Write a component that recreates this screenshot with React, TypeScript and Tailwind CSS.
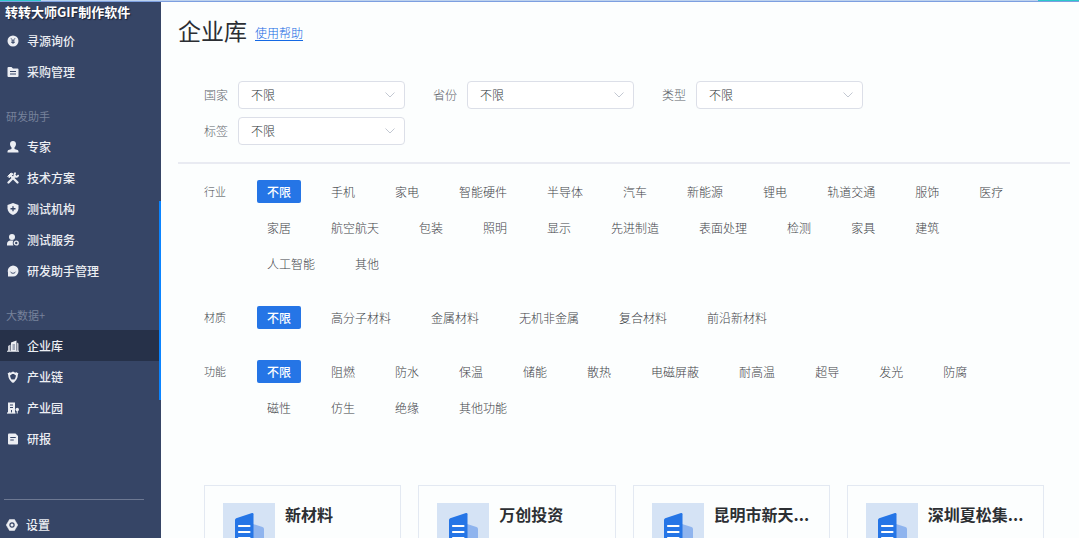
import React from "react";

type IconName =
  | "price" | "folder" | "expert" | "tools" | "shield" | "service"
  | "chat" | "company" | "chain" | "park" | "report" | "gear";

const BG = "#364566";

function Icon({ name }: { name: IconName }) {
  const shapes: Record<IconName, React.ReactNode> = {
    price: (
      <>
        <circle cx="12" cy="12" r="11" />
        <path d="M8 6.500l4 5 4-5M12 11.500V18M8.500 12h7M8.500 15h7" fill="none" stroke={BG} strokeWidth="1.800" />
      </>
    ),
    folder: (
      <>
        <path d="M1 4a2 2 0 0 1 2-2h6l3 3h9a2 2 0 0 1 2 2v13a2 2 0 0 1-2 2H3a2 2 0 0 1-2-2z" />
        <path d="M6 11h12M6 16h12" stroke={BG} strokeWidth="2.200" />
      </>
    ),
    expert: (
      <path d="M12 0c3.500 0 6 2.600 6 6 0 3-1.500 5.500-3 7v3l6 2c1.500.600 2 2 2 3.500V23H1v-1.500c0-1.500.500-2.900 2-3.500l6-2v-3c-1.500-1.500-3-4-3-7 0-3.400 2.500-6 6-6z" />
    ),
    tools: (
      <g fill="none" stroke="currentColor" strokeLinecap="round">
        <path d="M8 8l13 13" strokeWidth="4.500" />
        <path d="M3 21L16 8" strokeWidth="4.500" />
        <path d="M2 8l6-6 4 2-7 7z" fill="currentColor" strokeWidth="2" />
        <path d="M16 2.500c-2 3-1 6 1 6.500s4 1 5-1.500" strokeWidth="4" />
      </g>
    ),
    shield: (
      <>
        <path d="M12 0l11 4v7c0 6-5 10.500-11 13C6 21.500 1 17 1 11V4z" />
        <path d="M12 6.500v10M7 11.500h10" stroke={BG} strokeWidth="2.600" />
      </>
    ),
    service: (
      <>
        <circle cx="10" cy="6" r="6" />
        <path d="M0 23v-3c0-4 3-7 7-7h6c-2 3-2 7 0 10z" />
        <circle cx="18.500" cy="18" r="3.800" fill="none" stroke="currentColor" strokeWidth="2.800" />
      </>
    ),
    chat: (
      <>
        <path d="M12 1a11 11 0 1 1 0 22H2v-8A11 11 0 0 1 12 1z" />
        <path d="M7 13.500c2 4 8 4 10 0" fill="none" stroke={BG} strokeWidth="2" />
      </>
    ),
    company: (
      <>
        <path d="M8 5l11-4v21H8z" />
        <path d="M2 12l5-3v13H2zM20 5l3 2v15h-3z" opacity=".8" />
        <path d="M0 22.500h24" stroke="currentColor" strokeWidth="2" />
        <path d="M11 10h5M11 14h5M11 18h5" stroke={BG} strokeWidth="1.600" />
      </>
    ),
    chain: (
      <>
        <path d="M4 6c3.500 0 5-1 8-3 3 2 4.500 3 8 3 0 8-2 12-8 15C6 18 4 14 4 6z" fill="none" stroke="currentColor" strokeWidth="3.500" />
        <path d="M1 5l5-3 3 5-4 3zM23 5l-5-3-3 5 4 3z" />
        <circle cx="12" cy="20" r="3.500" />
      </>
    ),
    park: (
      <>
        <path d="M2 1h14v21H2z" />
        <path d="M6 6h6M6 11h6M9 16v6" stroke={BG} strokeWidth="2" />
        <path d="M0 22h17" stroke="currentColor" strokeWidth="2.500" />
        <circle cx="20.500" cy="15" r="3.500" />
        <path d="M20.500 15v8" stroke="currentColor" strokeWidth="2" />
      </>
    ),
    report: (
      <>
        <path d="M2 3a2 2 0 0 1 2-2h13l5 5v15a2 2 0 0 1-2 2H4a2 2 0 0 1-2-2z" />
        <path d="M6.500 9h11M6.500 14h7" stroke={BG} strokeWidth="2" />
      </>
    ),
    gear: (
      <>
        <path d="M7 1h10l6.500 11L17 23H7L.500 12z" stroke="currentColor" strokeLinejoin="round" />
        <circle cx="12" cy="12" r="4.200" fill="none" stroke={BG} strokeWidth="2.400" />
      </>
    ),
  };
  return (
    <svg viewBox="0 0 24 24" className="size-3 shrink-0" fill="currentColor" aria-hidden="true">
      {shapes[name]}
    </svg>
  );
}

type NavEntry = { label: string; icon: IconName; active?: boolean };

const sections: { title?: string; items: NavEntry[] }[] = [
  {
    items: [
      { label: "寻源询价", icon: "price" },
      { label: "采购管理", icon: "folder" },
    ],
  },
  {
    title: "研发助手",
    items: [
      { label: "专家", icon: "expert" },
      { label: "技术方案", icon: "tools" },
      { label: "测试机构", icon: "shield" },
      { label: "测试服务", icon: "service" },
      { label: "研发助手管理", icon: "chat" },
    ],
  },
  {
    title: "大数据+",
    items: [
      { label: "企业库", icon: "company", active: true },
      { label: "产业链", icon: "chain" },
      { label: "产业园", icon: "park" },
      { label: "研报", icon: "report" },
    ],
  },
];

function NavLink({ label, icon, active }: NavEntry) {
  return (
    <a
      href="#"
      aria-current={active ? "page" : undefined}
      className={`flex h-[31px] items-center gap-2 pl-[7px] text-xs font-medium text-[#eceef3] ${active ? "bg-[#263149]" : ""}`}
    >
      <Icon name={icon} />
      {label}
    </a>
  );
}

function Sidebar() {
  return (
    <aside className="relative flex w-[161px] shrink-0 flex-col bg-[#364566]">
      <div className="h-[23px] pl-[5px] text-[13px] leading-[20px] font-bold whitespace-nowrap text-white [text-shadow:1px_1px_1px_#1b2233]">
        转转大师GIF制作软件
      </div>
      <nav>
        {sections.map((section, i) => (
          <div key={i}>
            {section.title && (
              <h2 className="h-11 pt-[19px] pl-[6px] text-[11px] leading-[20px] text-[#76829b]">{section.title}</h2>
            )}
            {section.items.map((item) => (
              <NavLink key={item.label} {...item} />
            ))}
          </div>
        ))}
      </nav>
      <div className="mt-auto">
        <hr className="mr-[17px] ml-1 border-t border-[#6d7892]" />
        <a href="#" className="flex h-[38px] items-center gap-2 pt-3 pl-[6px] text-xs font-medium text-[#eceef3]">
          <Icon name="gear" />
          设置
        </a>
      </div>
      <div className="absolute top-[199px] right-0 h-[199px] w-[2px] bg-[#0a84ff]" />
    </aside>
  );
}

function SelectField({ id, label }: { id: string; label: string }) {
  return (
    <div className="flex items-center gap-[9px]">
      <label htmlFor={id} className="w-[25px] text-xs font-light whitespace-nowrap text-[#5f646c]">
        {label}
      </label>
      <div className="relative">
        <select
          id={id}
          className="h-7 w-[167px] appearance-none rounded border border-[#dcdfe8] bg-white pl-3 text-xs font-light text-[#2f3338]"
        >
          <option>不限</option>
        </select>
        <svg
          viewBox="0 0 12 8"
          className="pointer-events-none absolute top-[10px] right-[9px] h-2 w-3"
          fill="none"
          stroke="#c3c8d2"
          aria-hidden="true"
        >
          <path d="M1.500 1.500L6 6l4.500-4.500" />
        </svg>
      </div>
    </div>
  );
}

const filters = [
  {
    label: "行业",
    options: [
      "不限", "手机", "家电", "智能硬件", "半导体", "汽车", "新能源", "锂电", "轨道交通", "服饰", "医疗",
      "家居", "航空航天", "包装", "照明", "显示", "先进制造", "表面处理", "检测", "家具", "建筑",
      "人工智能", "其他",
    ],
  },
  { label: "材质", options: ["不限", "高分子材料", "金属材料", "无机非金属", "复合材料", "前沿新材料"] },
  {
    label: "功能",
    options: [
      "不限", "阻燃", "防水", "保温", "储能", "散热", "电磁屏蔽", "耐高温", "超导", "发光", "防腐",
      "磁性", "仿生", "绝缘", "其他功能",
    ],
  },
];

function FilterRow({ label, options }: { label: string; options: string[] }) {
  return (
    <div className="flex pr-4">
      <span className="w-[53px] shrink-0 text-[11px] leading-[22px] font-light text-[#43474d]">{label}</span>
      <div className="flex flex-wrap gap-x-5 gap-y-[13px]">
        {options.map((option, i) => (
          <button
            key={option}
            type="button"
            className={`h-[23px] rounded-[2px] px-[10px] text-xs ${
              i === 0 ? "bg-[#2575e6] font-medium text-white" : "font-light text-[#3f4348]"
            }`}
          >
            {option}
          </button>
        ))}
      </div>
    </div>
  );
}

function CompanyCard({ name }: { name: string }) {
  return (
    <article className="flex h-[150px] gap-[10px] border border-[#e3e9f2] py-[17px] pl-[18px]">
      <svg viewBox="0 0 52 52" className="size-[52px] shrink-0" aria-hidden="true">
        <path fill="#d5e3f5" d="M0 0h52v52H0z" />
        <path fill="#8fb4ee" d="M30 21l9.500 3q1.500.500 1.500 2v20H30z" />
        <path fill="#2575e6" d="M12 17q0-1.200 1.200-1.700L29 10q1.500-.300 1.500 1.200V46H12z" />
        <path stroke="#fff" strokeWidth="2.200" strokeLinecap="round" d="M16 23h10.500M16 29h10.500M16 35h10.500" />
      </svg>
      <h3 className="text-base leading-[22px] font-bold whitespace-nowrap text-[#2c2f33]">{name}</h3>
    </article>
  );
}

const companies = ["新材料", "万创投资", "昆明市新天...", "深圳夏松集..."];

export default function App() {
  return (
    <div className="flex h-screen flex-col overflow-hidden bg-[#fcfefe] font-['Noto_Sans_CJK_SC',sans-serif]">
      <div className="flex h-[2px] shrink-0 justify-between border-b border-[#7d9fe0] bg-[#bdd2ee]">
        <span className="h-px w-[41px] bg-[#2cc8cc]" />
        <span className="h-px w-[41px] bg-[#2cc8cc]" />
      </div>
      <div className="flex min-h-0 grow">
        <Sidebar />
        <main className="min-w-0 grow overflow-hidden pr-[9px] pl-[17px]">
          <header className="flex items-center gap-2 pt-[11px]">
            <h1 className="text-[23px] leading-[34px] font-normal text-[#2b2e33]">企业库</h1>
            <a href="#" className="pt-[6px] text-xs font-light text-[#1469e4] underline underline-offset-2">
              使用帮助
            </a>
          </header>
          <form className="flex flex-wrap gap-x-7 gap-y-2 px-[26px] pt-[34px] pb-[17px]">
            <SelectField id="country" label="国家" />
            <SelectField id="province" label="省份" />
            <SelectField id="type" label="类型" />
            <SelectField id="tag" label="标签" />
          </form>
          <hr className="border-t-2 border-[#e9ebf2]" />
          <section className="flex flex-col gap-[31px] px-[26px] pt-4">
            {filters.map((f) => (
              <FilterRow key={f.label} {...f} />
            ))}
          </section>
          <section className="grid grid-cols-4 gap-[17px] px-[26px] pt-[66px]">
            {companies.map((name) => (
              <CompanyCard key={name} name={name} />
            ))}
          </section>
        </main>
      </div>
    </div>
  );
}
